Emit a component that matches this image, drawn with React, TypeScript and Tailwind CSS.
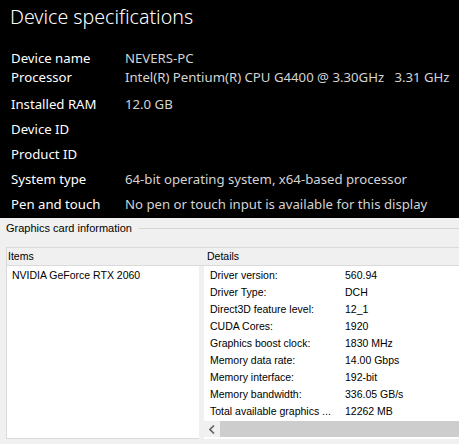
import * as React from "react";

const SPECS: [string, string][] = [
  ["Installed RAM", "12.0 GB"],
  ["Device ID", ""],
  ["Product ID", ""],
  ["System type", "64-bit operating system, x64-based processor"],
  ["Pen and touch", "No pen or touch input is available for this display"],
];

const DETAILS: [string, string][] = [
  ["Driver version:", "560.94"],
  ["Driver Type:", "DCH"],
  ["Direct3D feature level:", "12_1"],
  ["CUDA Cores:", "1920"],
  ["Graphics boost clock:", "1830 MHz"],
  ["Memory data rate:", "14.00 Gbps"],
  ["Memory interface:", "192-bit"],
  ["Memory bandwidth:", "336.05 GB/s"],
  ["Total available graphics ...", "12262 MB"],
];

export default function App() {
  return (
    <div className="flex h-[444px] w-[459px] flex-col overflow-hidden bg-[#f0f0f0]">
      {/* Settings page part, dark theme */}
      <section className="flex h-[218px] shrink-0 flex-col bg-black font-['Noto_Sans',sans-serif] text-[13.2px]">
        <h1 className="mt-[3px] pl-[10px] text-[19.6px] font-light leading-[28px] text-white">
          Device specifications
        </h1>
        <div className="mt-[18px] flex flex-col">
          <div className="flex h-[19px] items-center">
            <span className="w-[125px] shrink-0 pl-[11px] text-white">Device name</span>
            <span className="text-[#d4d4d4]">NEVERS-PC</span>
          </div>
          <div className="flex h-[19px] items-center">
            <span className="w-[125px] shrink-0 pl-[11px] text-white">Processor</span>
            <span className="whitespace-pre text-[#d4d4d4]">
              Intel(R) Pentium(R) CPU G4400 @ 3.30GHz   3.31 GHz
            </span>
          </div>
        </div>
        <div className="mt-[5px] flex flex-col">
          {SPECS.map(([k, v]) => (
            <div key={k} className="flex h-[25px] items-center">
              <span className="w-[125px] shrink-0 pl-[11px] text-white">{k}</span>
              <span className="whitespace-nowrap text-[#d4d4d4]">{v}</span>
            </div>
          ))}
        </div>
      </section>

      {/* dxdiag-style group box */}
      <section className="flex flex-1 flex-col font-['Liberation_Sans',sans-serif] text-[10.5px] text-black">
        <div className="mt-[3px] flex h-[14px] items-center pl-[6px]">
          <span className="pr-[7px] text-[11px]">Graphics card information</span>
          <div className="h-px flex-1 bg-[#d5d5d5]" />
        </div>

        <div className="ml-[6px] mt-[12px] flex h-[19px] items-center border-y border-l border-[#dadada]">
          <span className="w-[200px] pl-[1px]">Items</span>
          <span>Details</span>
        </div>

        <div className="ml-[6px] flex h-[173px] gap-[5px]">
          <div className="w-[193px] border-b border-l border-[#dadada] bg-white pl-[5px] pt-[2px]">
            NVIDIA GeForce RTX 2060
          </div>
          <div className="flex flex-1 flex-col bg-white">
            <div className="flex flex-1 flex-col pt-[1px]">
              {DETAILS.map(([k, v]) => (
                <div key={k} className="flex h-[17px] items-center whitespace-nowrap">
                  <span className="w-[141px] shrink-0 pl-[6px]">{k}</span>
                  <span>{v}</span>
                </div>
              ))}
            </div>
            <div className="mb-[2px] flex h-[16px] bg-[#f0f0f0]">
              <div className="flex w-[16px] items-center justify-center">
                <svg width="6" height="9" viewBox="0 0 6 9">
                  <path d="M5 0.5 L1 4.5 L5 8.5" fill="none" stroke="#606060" strokeWidth="1.6" />
                </svg>
              </div>
              <div className="flex-1 bg-[#cdcdcd]" />
            </div>
          </div>
        </div>
      </section>
    </div>
  );
}
